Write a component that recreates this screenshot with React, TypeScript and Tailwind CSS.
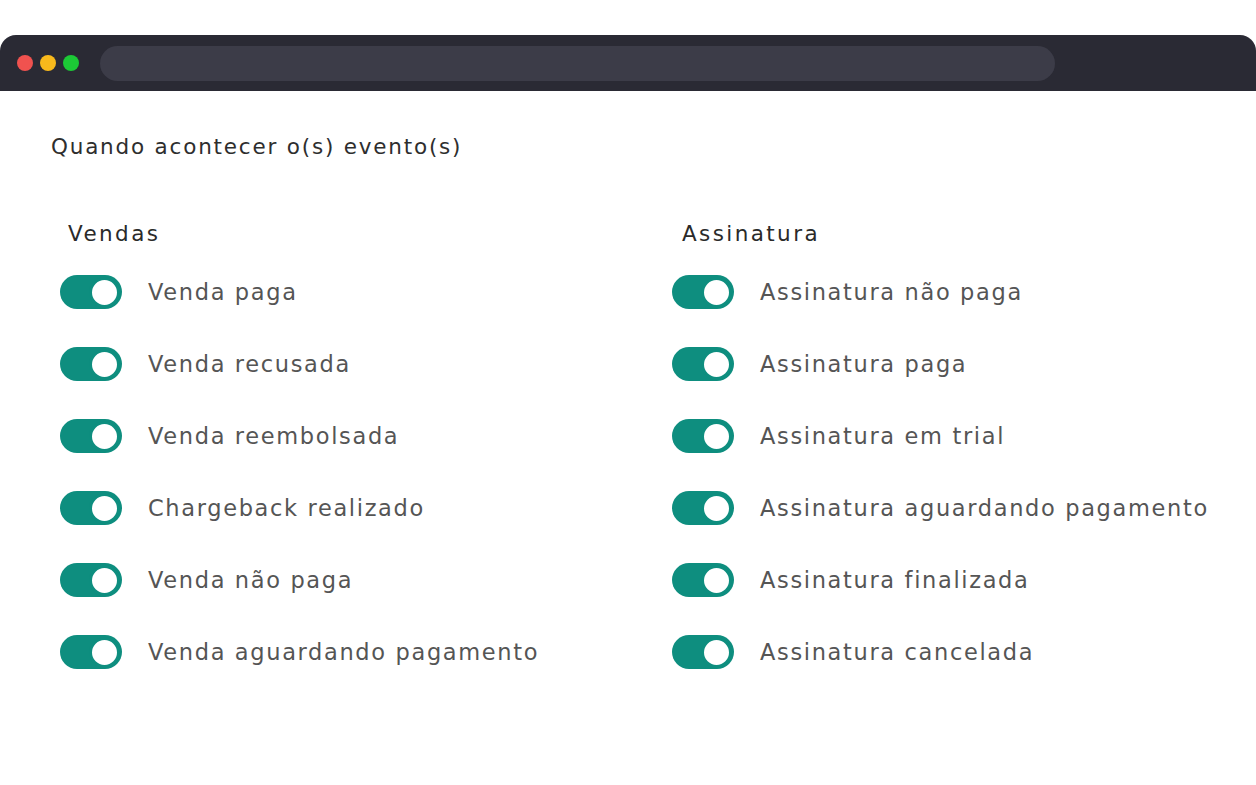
import React from "react";

const vendas = [
  "Venda paga",
  "Venda recusada",
  "Venda reembolsada",
  "Chargeback realizado",
  "Venda não paga",
  "Venda aguardando pagamento",
];

const assinatura = [
  "Assinatura não paga",
  "Assinatura paga",
  "Assinatura em trial",
  "Assinatura aguardando pagamento",
  "Assinatura finalizada",
  "Assinatura cancelada",
];

function Toggle() {
  return (
    <div className="flex h-[34px] w-[62px] shrink-0 items-center justify-end rounded-full bg-[#0e8e7f] pr-[2px]">
      <div className="h-[31px] w-[31px] rounded-full border-[3px] border-[#0e8e7f] bg-white" />
    </div>
  );
}

function Column({ title, items, headPad }: { title: string; items: string[]; headPad: string }) {
  return (
    <div className="flex flex-col">
      <h3 className={`h-[30px] text-[21.5px] leading-[30px] tracking-[2.4px] text-[#2a2a2a] ${headPad}`}>{title}</h3>
      <ul className="mt-[26px] flex flex-col gap-[38px]">
        {items.map((item) => (
          <li key={item} className="flex h-[34px] items-center gap-[26px]">
            <Toggle />
            <span className="text-[22.5px] leading-none tracking-[1.65px] text-[#555]">{item}</span>
          </li>
        ))}
      </ul>
    </div>
  );
}

export default function App() {
  return (
    <div className="h-[785px] w-[1256px] bg-white pt-[35px] font-['DejaVu_Sans',sans-serif]">
      <div className="flex h-[56px] items-center rounded-t-[16px] bg-[#2a2a34] pl-[17px]">
        <div className="flex gap-[7px]">
          <span className="h-[16px] w-[16px] rounded-full bg-[#f0524f]" />
          <span className="h-[16px] w-[16px] rounded-full bg-[#f8b91c]" />
          <span className="h-[16px] w-[16px] rounded-full bg-[#1cc936]" />
        </div>
        <div className="ml-[21px] h-[35px] w-[955px] rounded-full bg-[#3c3c48]" />
      </div>
      <div className="pl-[51px] pt-[36px]">
        <p className="text-[21.5px] leading-[40px] tracking-[1.8px] text-[#2e2e2e]">Quando acontecer o(s) evento(s)</p>
      </div>
      <div className="mt-[52px] grid grid-cols-[612px_1fr] pl-[60px]">
        <Column title="Vendas" items={vendas} headPad="pl-[8px]" />
        <Column title="Assinatura" items={assinatura} headPad="pl-[10px]" />
      </div>
    </div>
  );
}
